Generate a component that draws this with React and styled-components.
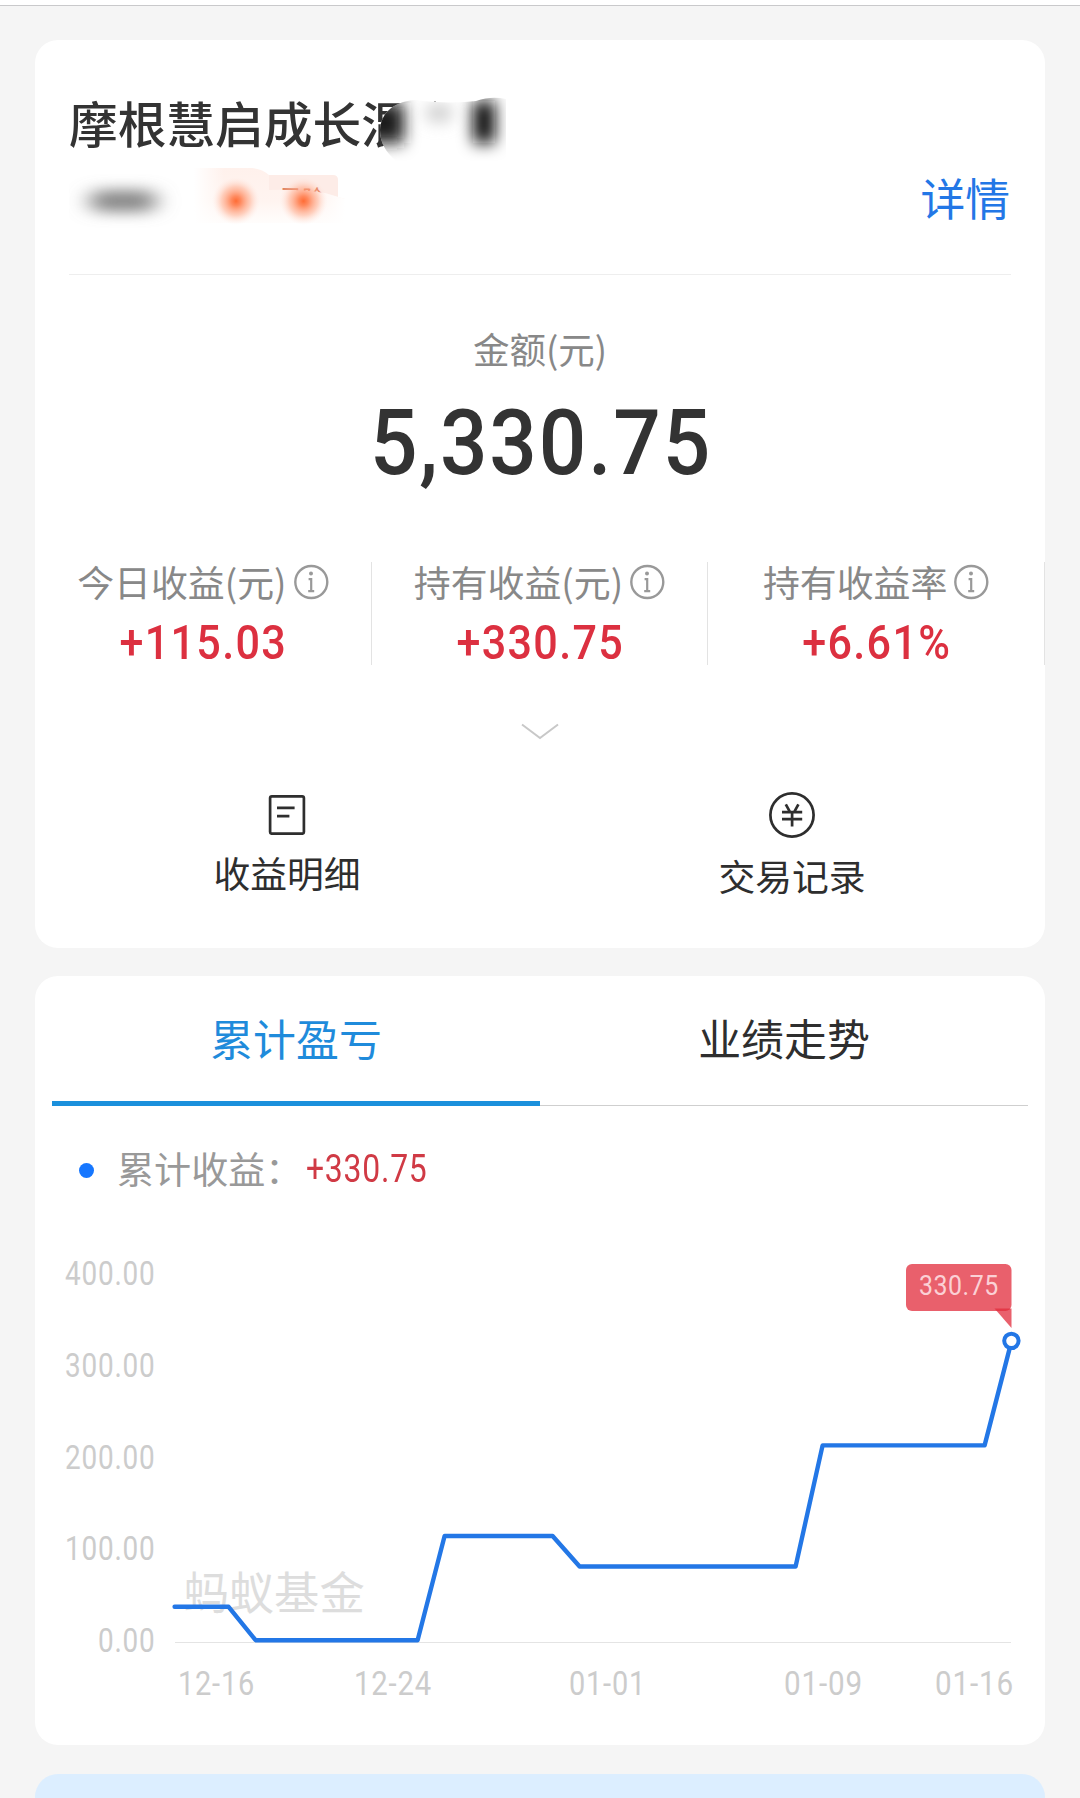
import React, { useState } from 'react';
import styled, { createGlobalStyle } from 'styled-components';

const GlobalStyle = createGlobalStyle`
  * {
    box-sizing: border-box;
  }

  body {
    margin: 0;
    background: #f5f5f5;
    font-family: 'Noto Sans CJK SC', sans-serif;
    color: #333;
  }
`;

const Page = styled.main`
  width: 1080px;
  height: 1798px;
  overflow: hidden;
  display: flex;
  flex-direction: column;
`;

const TopEdge = styled.div`
  height: 6px;
  flex: none;
  background: #fff;
  border-bottom: 1px solid #c9c9cb;
  margin-bottom: 34px;
`;

const Card = styled.section`
  flex: none;
  width: 1010px;
  height: ${(props) => props.$height}px;
  margin: 0 auto ${(props) => props.$gap || 28}px;
  background: ${(props) => props.$bg || '#fff'};
  border-radius: 23px;
`;

const Header = styled.header`
  margin: 0 34px;
  padding-top: 52px;
  height: 235px;
  border-bottom: 1px solid #eee;
`;

const FundName = styled.h1`
  position: relative;
  margin: 0;
  font-size: 48.7px;
  font-weight: 500;
  line-height: 60px;
  white-space: nowrap;
`;

const NameSmudge = styled.svg`
  position: absolute;
  left: 301px;
  top: 3px;
`;

const HeaderRow = styled.div`
  display: flex;
  justify-content: space-between;
  align-items: center;
  height: 89px;
`;

const DetailLink = styled.a`
  margin-right: 1px;
  font-size: 44.8px;
  line-height: 60px;
  color: #2377e6;
`;

// Narrow numerals used for every figure
const Num = styled.span`
  display: inline-block;
  font-weight: ${(props) => props.$weight || 400};
  letter-spacing: ${(props) => props.$spacing || 0}px;
  margin-right: -${(props) => props.$spacing || 0}px;
  transform: scaleX(${(props) => props.$narrow || 1});
  transform-origin: ${(props) => props.$origin || 'center'};
`;

const AmountBlock = styled.div`
  display: flex;
  flex-direction: column;
  align-items: center;
  padding-top: 49px;
  height: 287px;
`;

const AmountLabel = styled.div`
  font-size: 36.5px;
  line-height: 50px;
  color: #888;
`;

const Amount = styled.div`
  margin-top: 20px;
  font-family: Roboto, sans-serif;
  font-size: 90px;
  line-height: 100px;
  color: #333;
`;

const Stats = styled.div`
  display: grid;
  grid-template-columns: repeat(3, 1fr);
  height: 103px;
`;

const Stat = styled.div`
  display: flex;
  flex-direction: column;
  align-items: center;
  height: 103px;
  border-right: 1px solid #e3e3e3;
`;

const StatLabel = styled.div`
  display: flex;
  align-items: center;
  gap: 7px;
  margin-top: -1px;
  font-size: 36.9px;
  line-height: 40px;
  color: #888;

  svg {
    margin-top: 2px;
  }
`;

const StatValue = styled.div`
  margin-top: 17px;
  font-family: Roboto, sans-serif;
  font-size: 49px;
  line-height: 50px;
  color: #dc3040;
`;

const Expand = styled.div`
  display: flex;
  justify-content: center;
  padding-top: 57px;
  height: 127px;
`;

const Actions = styled.div`
  display: grid;
  grid-template-columns: 504px 506px;
`;

const Action = styled.div`
  display: flex;
  flex-direction: column;
  align-items: center;
  gap: 15px;
  font-size: 36.8px;
  line-height: 44px;
  color: #2e2e2e;
`;

const Tabs = styled.div`
  display: flex;
  margin: 0 17px;
  height: 130px;
`;

const Tab = styled.button`
  flex: 1;
  display: flex;
  justify-content: center;
  align-items: flex-start;
  padding: 31px 0 0;
  border: 0;
  border-bottom: ${(props) => (props.$active ? '5px solid #1b90dc' : '1px solid #cfcfcf')};
  background: none;
  font: inherit;
  font-size: 42.9px;
  line-height: 60px;
  color: ${(props) => (props.$active ? '#1f8bdb' : '#2e2e2e')};
`;

const Legend = styled.div`
  display: flex;
  align-items: center;
  height: 50px;
  margin-top: 38px;
  padding-left: 44px;
  color: #999;
`;

const Dot = styled.i`
  width: 15px;
  height: 15px;
  margin: 2px 23px 0 0;
  border-radius: 50%;
  background: #1677ff;
`;

const LegendLabel = styled.span`
  font-size: 37.1px;
  line-height: 50px;
  margin-top: -2px;
`;

const LegendValue = styled.span`
  margin-left: 4px;
  font-family: Roboto, sans-serif;
  font-size: 38px;
  line-height: 50px;
  margin-top: -1px;
  color: #d03a45;
`;

const Chart = styled.svg`
  display: block;

  text {
    font-family: Roboto, 'Noto Sans CJK SC', sans-serif;
  }
`;

const InfoIcon = () => (
  <svg width="35" height="36" viewBox="0 0 35 36" fill="none" stroke="#999">
    <circle cx="17.3" cy="18" r="16" strokeWidth="2.4" />
    <circle cx="17" cy="9.4" r="2" fill="#999" stroke="none" />
    <path d="M14.6 15.2h2.6v12M14.2 27.2h6" strokeWidth="2.2" />
  </svg>
);

const ChevronIcon = () => (
  <svg width="38" height="20" viewBox="0 0 38 20" fill="none" stroke="#c8c8c8" strokeWidth="2">
    <path d="M1 2.5l18 13.5 18-13.5" />
  </svg>
);

const BillIcon = () => (
  <svg width="46" height="43" viewBox="0 0 46 43" fill="none" stroke="#2e2e2e" strokeWidth="2.7">
    <rect x="6.1" y="4.3" width="33.8" height="37.4" rx="1.8" />
    <path d="M13 15.8h17.6M13 24.2h12.4" />
  </svg>
);

const YuanIcon = () => (
  <svg width="46" height="46" viewBox="0 0 46 46" fill="none" stroke="#2e2e2e" strokeWidth="2.7">
    <circle cx="23" cy="23" r="21.6" />
    <path d="M16.8 12.3l4 7.4M29.4 12.3l-4 7.4M13 20.2h20.2M13 27.2h20.2M23.1 20v14.5" />
  </svg>
);

const NameCover = () => (
  <NameSmudge width="150" height="66" viewBox="370 95 150 66">
    <defs>
      <clipPath id="nameArea">
        <path d="M380 130C381 113 393 102 414 100C436 103 460 103 476 101C487 97 497 97 506 99V161H396C386 152 380 143 380 130Z" />
      </clipPath>
      <filter id="soft" x="-100%" y="-100%" width="300%" height="300%">
        <feGaussianBlur stdDeviation="7.5 8" />
      </filter>
    </defs>
    <g clipPath="url(#nameArea)">
      <rect x="370" y="95" width="150" height="66" fill="#fff" />
      <rect x="364" y="103" width="40" height="40" fill="#1c1c1c" filter="url(#soft)" />
      <ellipse cx="439" cy="113" rx="14" ry="9" fill="#ccc" filter="url(#soft)" />
      <rect x="473" y="101" width="22" height="42" fill="#080808" filter="url(#soft)" />
    </g>
  </NameSmudge>
);

const FundTags = () => (
  <svg width="290" height="70" viewBox="69 161 290 70">
    <defs>
      <filter id="grayBlur" x="-50%" y="-150%" width="200%" height="400%">
        <feGaussianBlur stdDeviation="11 7" />
      </filter>
      <radialGradient id="ember">
        <stop offset="0" stopColor="#ff6c35" />
        <stop offset="0.2" stopColor="#ff8558" stopOpacity="0.95" />
        <stop offset="0.6" stopColor="#ffb498" stopOpacity="0.6" />
        <stop offset="1" stopColor="#ffe9e2" stopOpacity="0" />
      </radialGradient>
      <linearGradient id="peach" x1="0" y1="0" x2="0" y2="1">
        <stop offset="0" stopColor="#fff1ec" />
        <stop offset="0.6" stopColor="#fff4f0" />
        <stop offset="1" stopColor="#fffdfc" />
      </linearGradient>
      <linearGradient id="peachSide">
        <stop offset="0" stopColor="#fff" />
        <stop offset="0.2" stopColor="#fff" stopOpacity="0" />
        <stop offset="0.8" stopColor="#fff" stopOpacity="0" />
        <stop offset="1" stopColor="#fff" />
      </linearGradient>
    </defs>
    <rect x="90" y="189" width="66" height="22" rx="10" fill="#888" filter="url(#grayBlur)" />
    <path d="M250 174h83q5 0 5 5v21h-88z" fill="#fdece7" />
    <text x="279" y="205.5" fontSize="23" fill="#d9683f">风险</text>
    <path d="M194 167h58q10 1 17 7v15q30-1 56 3l20 6v24H194z" fill="url(#peach)" />
    <path d="M194 167h58q10 1 17 7v15q30-1 56 3l20 6v24H194z" fill="url(#peachSide)" />
    <circle cx="236" cy="200" r="24" fill="url(#ember)" />
    <circle cx="303.5" cy="200" r="24" fill="url(#ember)" />
  </svg>
);

const stats = [
  { label: '今日收益(元)', value: '+115.03' },
  { label: '持有收益(元)', value: '+330.75' },
  { label: '持有收益率', value: '+6.61%' },
];

const tabs = ['累计盈亏', '业绩走势'];

// [day, cumulative profit]
const profit = [
  [0, 36.9],
  [2, 36.9],
  [3, 0],
  [9, 0],
  [10, 115.2],
  [14, 115.2],
  [15, 81.4],
  [23, 81.4],
  [24, 215.3],
  [30, 215.3],
  [31, 330.75],
];

const dates = [
  { label: '12-16', x: 143, width: 77 },
  { label: '12-24', x: 319, width: 78 },
  { label: '01-01', x: 534, width: 77 },
  { label: '01-09', x: 749, width: 79 },
  { label: '01-16', x: 900, width: 79 },
];

const toX = (day) => 139.6 + day * 27;
const toY = (value) => 446.2 - value * 0.905;

const ProfitChart = () => {
  const points = profit.map(([day, value]) => `${toX(day)},${toY(value)}`).join(' ');

  return (
    <Chart width="1010" height="551" viewBox="0 0 1010 551">
      <g fill="#ccc" fontSize="32.3" letterSpacing="0.9">
        {[400, 300, 200, 100, 0].map((value, i) => (
          <text
            key={value}
            x={value ? 30 : 63}
            y={91.4 + i * 91.6}
            textLength={value ? 90.5 : 57.5}
            lengthAdjust="spacingAndGlyphs"
          >
            {value.toFixed(2)}
          </text>
        ))}
        {dates.map((date) => (
          <text
            key={date.label}
            x={date.x}
            y="501"
            textLength={date.width}
            lengthAdjust="spacingAndGlyphs"
          >
            {date.label}
          </text>
        ))}
      </g>
      <text x="148.5" y="415.5" fontSize="45.3" fill="#ddd">蚂蚁基金</text>
      <path d="M140 448.5H976" stroke="#e4e4e4" strokeWidth="1.2" />
      <polyline
        points={points}
        fill="none"
        stroke="#2377e6"
        strokeWidth="4.4"
        strokeLinejoin="round"
        strokeLinecap="round"
      />
      <circle cx="976.4" cy={toY(330.75)} r="7.2" fill="#fff" stroke="#2377e6" strokeWidth="4" />
      <g fill="#e22b3b" fillOpacity="0.75">
        <rect x="871" y="70" width="105.5" height="47" rx="6" />
        <path d="M959.5 114.5h17v19.5z" />
      </g>
      <text
        x="884"
        y="101"
        fontSize="28"
        fill="#fbd0d5"
        letterSpacing="0.6"
        textLength="79.8"
        lengthAdjust="spacingAndGlyphs"
      >
        330.75
      </text>
    </Chart>
  );
};

const App = () => {
  const [activeTab, setActiveTab] = useState(0);

  return (
    <Page>
      <GlobalStyle />
      <TopEdge />
      <Card $height={908}>
        <Header>
          <FundName>
            摩根慧启成长混合
            <NameCover />
          </FundName>
          <HeaderRow>
            <FundTags />
            <DetailLink>详情</DetailLink>
          </HeaderRow>
        </Header>
        <AmountBlock>
          <AmountLabel>金额(元)</AmountLabel>
          <Amount>
            <Num $weight={500} $narrow={0.93} $spacing={2}>5,330.75</Num>
          </Amount>
        </AmountBlock>
        <Stats>
          {stats.map((stat) => (
            <Stat key={stat.label}>
              <StatLabel>
                {stat.label}
                <InfoIcon />
              </StatLabel>
              <StatValue>
                <Num $weight={500} $narrow={0.88} $spacing={1.5}>{stat.value}</Num>
              </StatValue>
            </Stat>
          ))}
        </Stats>
        <Expand>
          <ChevronIcon />
        </Expand>
        <Actions>
          <Action>
            <BillIcon />
            收益明细
          </Action>
          <Action>
            <YuanIcon />
            交易记录
          </Action>
        </Actions>
      </Card>
      <Card $height={769} $gap={29}>
        <Tabs>
          {tabs.map((tab, i) => (
            <Tab key={tab} $active={i === activeTab} onClick={() => setActiveTab(i)}>
              {tab}
            </Tab>
          ))}
        </Tabs>
        <Legend>
          <Dot />
          <LegendLabel>累计收益：</LegendLabel>
          <LegendValue>
            <Num $narrow={0.84} $spacing={0.9} $origin="left">+330.75</Num>
          </LegendValue>
        </Legend>
        <ProfitChart />
      </Card>
      <Card $height={60} $bg="#dceeff" />
    </Page>
  );
};

export default App;
